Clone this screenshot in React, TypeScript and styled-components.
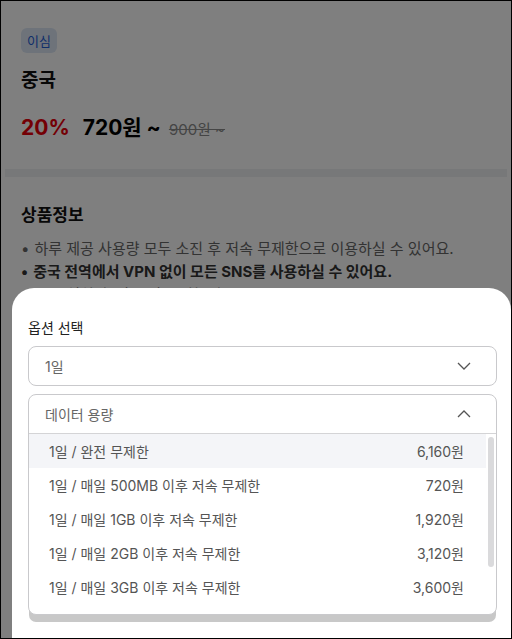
import styled, { createGlobalStyle } from "styled-components";

const GlobalStyle = createGlobalStyle`
  * { box-sizing: border-box; }
  body {
    margin: 0;
    background: #fff;
    font-family: Inter, "Noto Sans CJK KR", sans-serif;
  }
`;

const Frame = styled.div`
  position: relative;
  width: 512px;
  height: 639px;
  border: 1px solid #000;
  overflow: hidden;
  background: #fff;
`;

const TopSection = styled.section`
  padding: 27px 20px 24px;
`;

const Badge = styled.span`
  display: inline-flex;
  align-items: center;
  height: 25px;
  padding: 0 6px;
  border-radius: 6px;
  background: #dce6f5;
  color: #1e5ed4;
  font-size: 13px;
`;

const Title = styled.h1`
  margin: 15px 0 0;
  font-size: 19px;
  line-height: 26px;
  font-weight: 700;
  color: #111;
`;

const PriceRow = styled.div`
  display: flex;
  align-items: baseline;
  margin-top: 19px;
  line-height: 30px;
`;

const Discount = styled.span`
  color: #e8000b;
  font-size: 21px;
  font-weight: 700;
  margin-right: 13px;
`;

const Price = styled.span`
  color: #000;
  font-size: 21px;
  font-weight: 700;
  margin-right: 8px;
`;

const OldPrice = styled.span`
  color: #8a8a8a;
  font-size: 15px;
  text-decoration: line-through;
`;

const Divider = styled.div`
  height: 8px;
  margin: 0 4px;
  background: #eef0f3;
`;

const InfoSection = styled.section`
  padding: 26px 20px;
`;

const SectionTitle = styled.h2`
  margin: 0;
  font-size: 17px;
  line-height: 24px;
  font-weight: 700;
  color: #111;
`;

const BulletList = styled.ul`
  margin: 10px 0 0;
  padding: 0;
  list-style: none;
`;

const Bullet = styled.li<{ $strong?: boolean }>`
  font-size: 15px;
  line-height: 23px;
  color: ${(p) => (p.$strong ? "#333" : "#666")};
  font-weight: ${(p) => (p.$strong ? 700 : 400)};
  white-space: nowrap;
  &::before {
    content: "•";
    margin-right: 5px;
  }
`;

const Dim = styled.div`
  position: absolute;
  inset: 0;
  background: rgba(0, 0, 0, 0.5);
`;

const Sheet = styled.div`
  position: absolute;
  left: 11px;
  right: 0;
  top: 287px;
  bottom: -20px;
  background: #fff;
  border-radius: 22px 22px 0 0;
  padding: 30px 14px 0 16px;
`;

const SheetLabel = styled.div`
  font-size: 14px;
  line-height: 20px;
  color: #222;
  margin-bottom: 8px;
`;

const SelectBox = styled.div<{ $open?: boolean }>`
  position: relative;
  border: 1px solid #c9c9cc;
  border-radius: 8px;
  background: #fff;
  margin-bottom: 8px;
  box-shadow: ${(p) => (p.$open ? "0 8px 0 -1px #c8c8c8" : "none")};
  overflow: hidden;
`;

const SelectHead = styled.div<{ $open?: boolean }>`
  display: flex;
  align-items: center;
  justify-content: space-between;
  height: ${(p) => (p.$open ? "39px" : "38px")};
  padding: 0 25px 0 16px;
  font-size: 14px;
  color: #666;
  border-bottom: ${(p) => (p.$open ? "1px solid #d4d4d6" : "none")};
`;

const ListWrap = styled.div`
  position: relative;
  padding-right: 10px;
`;

const OptionList = styled.ul`
  margin: 0;
  padding: 0 0 10px;
  list-style: none;
`;

const ScrollThumb = styled.div`
  position: absolute;
  top: 3px;
  right: 2px;
  width: 6px;
  height: 130px;
  border-radius: 3px;
  background: #dadadc;
`;

const OptionItem = styled.li<{ $active?: boolean }>`
  display: flex;
  align-items: center;
  justify-content: space-between;
  height: 34px;
  padding: 0 22px 0 20px;
  font-size: 14px;
  color: #555;
  background: ${(p) => (p.$active ? "#f4f5f8" : "#fff")};
`;

const Chevron = ({ up }: { up?: boolean }) => (
  <svg width="14" height="8" viewBox="0 0 14 8">
    <polyline
      points={up ? "1,7 7,1 13,7" : "1,1 7,7 13,1"}
      fill="none"
      stroke="#555"
      strokeWidth="1.3"
    />
  </svg>
);

const options = [
  { name: "1일 / 완전 무제한", price: "6,160원" },
  { name: "1일 / 매일 500MB 이후 저속 무제한", price: "720원" },
  { name: "1일 / 매일 1GB 이후 저속 무제한", price: "1,920원" },
  { name: "1일 / 매일 2GB 이후 저속 무제한", price: "3,120원" },
  { name: "1일 / 매일 3GB 이후 저속 무제한", price: "3,600원" },
];

export default function App() {
  return (
    <>
      <GlobalStyle />
      <Frame>
        <TopSection>
          <Badge>이심</Badge>
          <Title>중국</Title>
          <PriceRow>
            <Discount>20%</Discount>
            <Price>720원 ~</Price>
            <OldPrice>900원 ~</OldPrice>
          </PriceRow>
        </TopSection>
        <Divider />
        <InfoSection>
          <SectionTitle>상품정보</SectionTitle>
          <BulletList>
            <Bullet>하루 제공 사용량 모두 소진 후 저속 무제한으로 이용하실 수 있어요.</Bullet>
            <Bullet $strong>중국 전역에서 VPN 없이 모든 SNS를 사용하실 수 있어요.</Bullet>
            <Bullet>즉시 설치 후 바로 사용 가능해요.</Bullet>
          </BulletList>
        </InfoSection>

        <Dim />
        <Sheet>
          <SheetLabel>옵션 선택</SheetLabel>
          <SelectBox>
            <SelectHead>
              1일
              <Chevron />
            </SelectHead>
          </SelectBox>
          <SelectBox $open>
            <SelectHead $open>
              데이터 용량
              <Chevron up />
            </SelectHead>
            <ListWrap>
              <OptionList>
                {options.map((o, i) => (
                  <OptionItem key={o.name} $active={i === 0}>
                    <span>{o.name}</span>
                    <span>{o.price}</span>
                  </OptionItem>
                ))}
              </OptionList>
              <ScrollThumb />
            </ListWrap>
          </SelectBox>
        </Sheet>
      </Frame>
    </>
  );
}
